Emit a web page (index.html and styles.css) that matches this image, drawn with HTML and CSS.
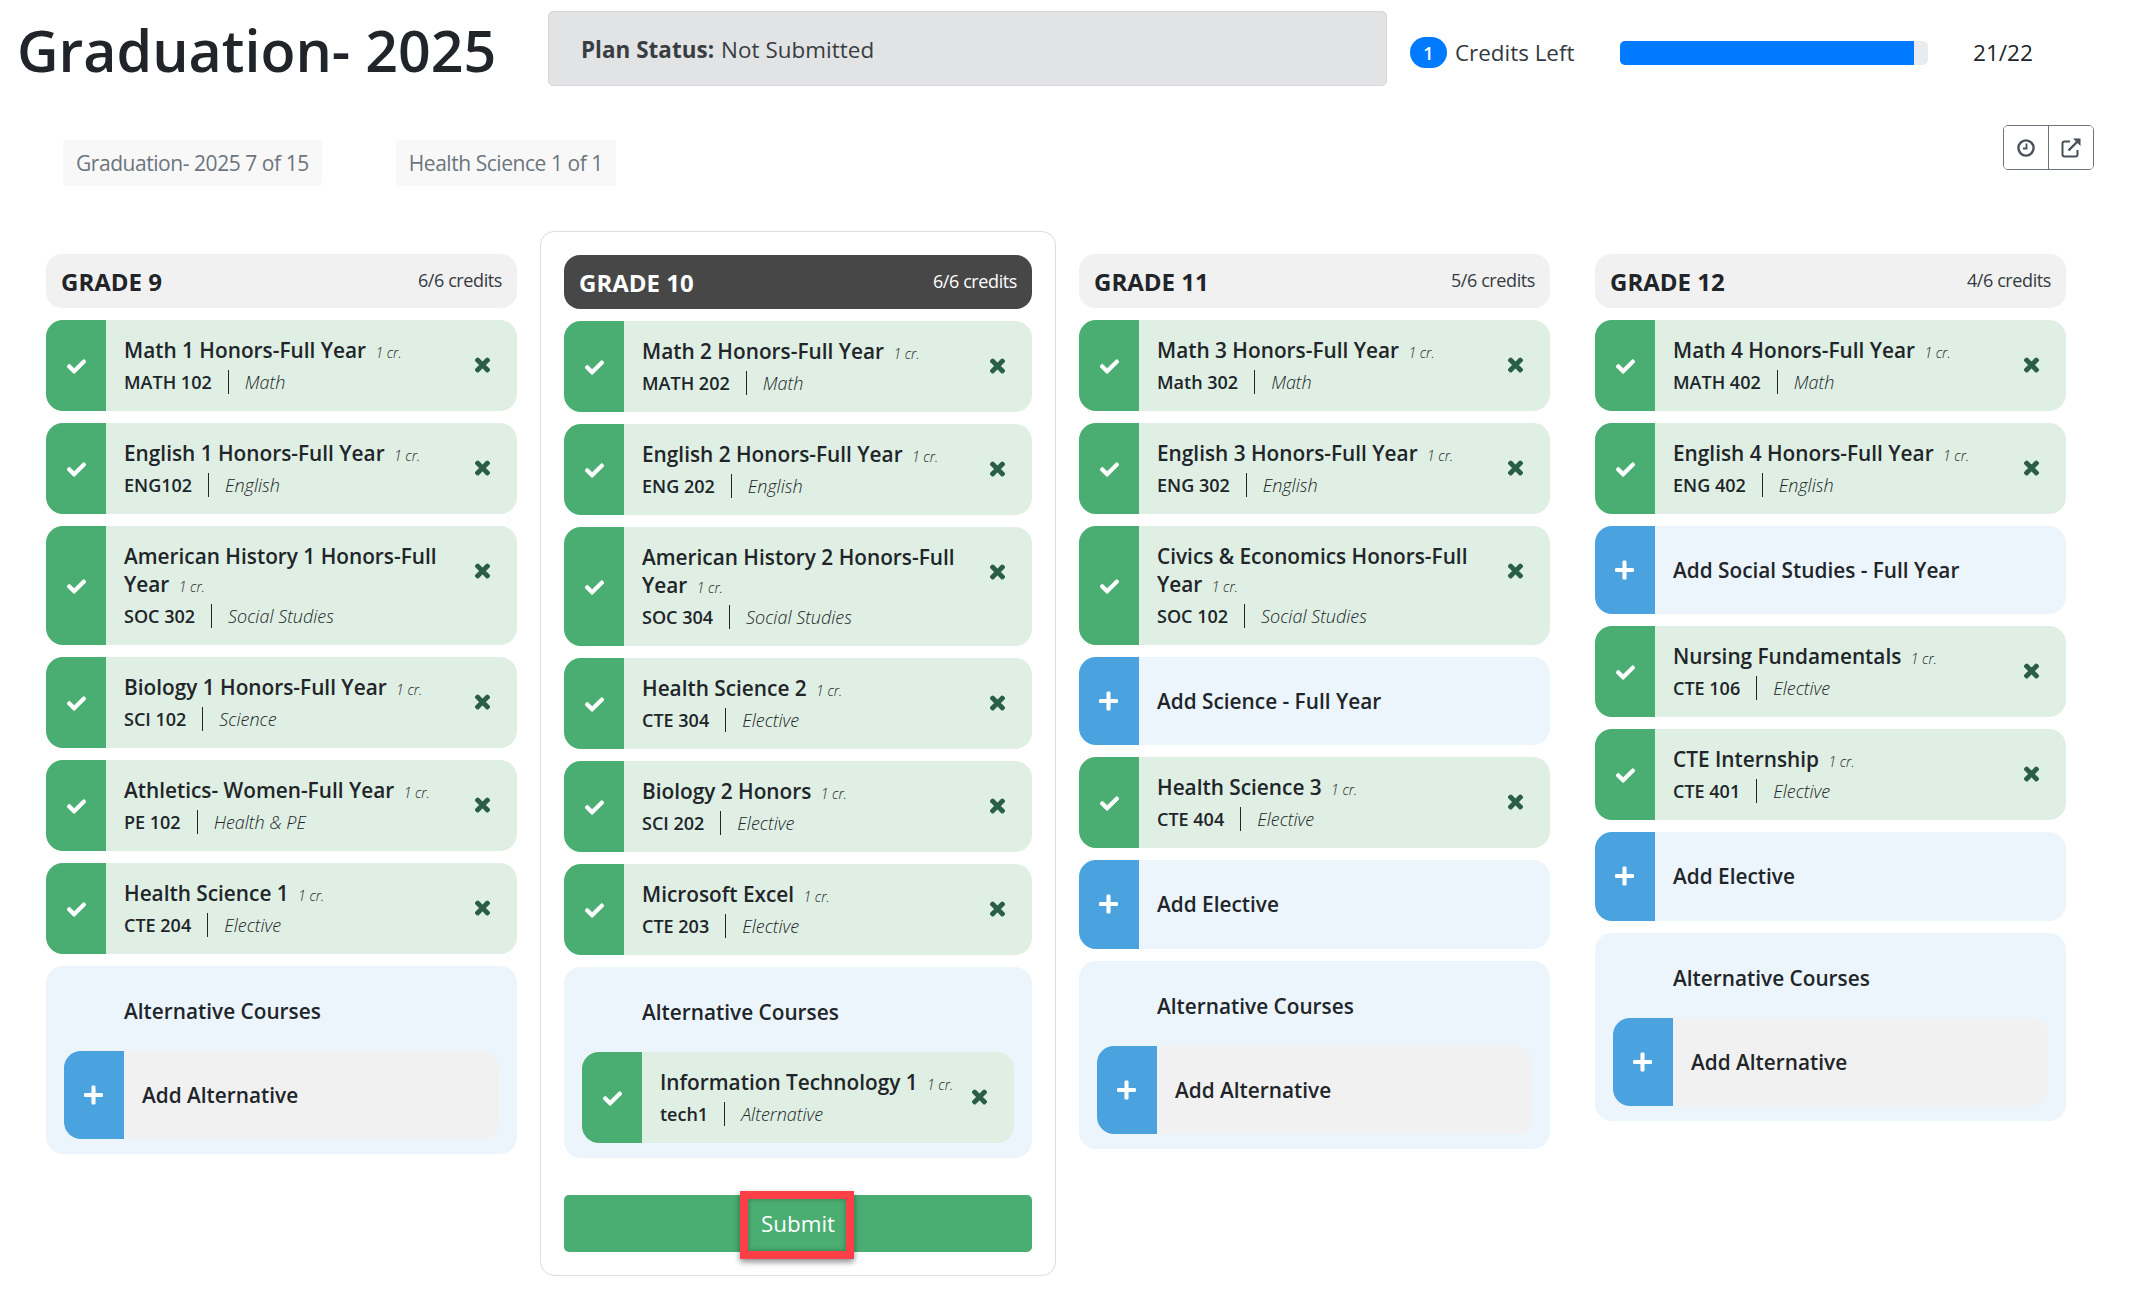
FILE: index.html
```html
<!DOCTYPE html>
<html lang="en">
<head>
<meta charset="utf-8">
<title>Graduation- 2025</title>
<link rel="stylesheet" href="styles.css">
</head>
<body>
<svg class="defs" width="0" height="0" aria-hidden="true">
  <symbol id="i-check" viewBox="0 0 512 512"><path d="M173.898 439.404l-166.4-166.4c-9.997-9.997-9.997-26.206 0-36.204l36.203-36.204c9.997-9.998 26.207-9.998 36.204 0L192 312.69 432.095 72.596c9.997-9.997 26.207-9.997 36.204 0l36.203 36.204c9.997 9.997 9.997 26.206 0 36.204l-294.4 294.401c-9.998 9.997-26.207 9.997-36.204-.001z"/></symbol>
  <symbol id="i-times" viewBox="0 0 352 512"><path d="M242.72 256l100.07-100.07c12.28-12.28 12.28-32.19 0-44.48l-22.24-22.24c-12.28-12.28-32.19-12.28-44.48 0L176 189.28 75.93 89.21c-12.28-12.28-32.19-12.28-44.48 0L9.21 111.45c-12.28 12.28-12.28 32.19 0 44.48L109.28 256 9.21 356.07c-12.28 12.28-12.28 32.19 0 44.48l22.24 22.24c12.28 12.28 32.2 12.28 44.48 0L176 322.72l100.07 100.07c12.28 12.28 32.2 12.28 44.48 0l22.24-22.24c12.28-12.28 12.28-32.19 0-44.48L242.72 256z"/></symbol>
  <symbol id="i-plus" viewBox="0 0 448 512"><path d="M416 208H272V64c0-17.67-14.33-32-32-32h-32c-17.67 0-32 14.33-32 32v144H32c-17.67 0-32 14.33-32 32v32c0 17.67 14.33 32 32 32h144v144c0 17.67 14.33 32 32 32h32c17.67 0 32-14.33 32-32V304h144c17.67 0 32-14.33 32-32v-32c0-17.67-14.33-32-32-32z"/></symbol>
</svg>

<header class="top">
  <h1 class="title">Graduation- 2025</h1>
  <div class="status"><b>Plan Status:</b> Not Submitted</div>
  <div class="credits"><span class="badge">1</span><span class="credits-label">Credits Left</span></div>
  <div class="progress"><div class="progress-fill" style="width:95.45%"></div></div>
  <div class="count">21/22</div>
</header>

<div class="tools">
  <div class="tags">
    <span class="tag">Graduation- 2025 7 of 15</span>
    <span class="tag">Health Science 1 of 1</span>
  </div>
  <div class="btn-group">
    <button class="tool-btn" aria-label="History"><svg width="20" height="20" viewBox="0 0 20 20" fill="none" stroke="#495057" stroke-width="2.4"><circle cx="10" cy="10" r="7.6"/><path d="M10.5 5.5v5H7" stroke-width="1.8"/></svg></button>
    <button class="tool-btn" aria-label="Open"><svg width="22" height="22" viewBox="0 0 22 22" fill="none" stroke="#495057" stroke-width="2"><path d="M10 4.5H4.5a2 2 0 0 0-2 2v11a2 2 0 0 0 2 2h11a2 2 0 0 0 2-2V13"/><path d="M8.5 13.5L18 4" stroke-width="2.4"/><path d="M13 1.5h7.5V9z" fill="#495057" stroke="none"/></svg></button>
  </div>
</div>

<main class="board">

  <section class="col">
    <div class="grade"><h2>GRADE 9</h2><span>6/6 credits</span></div>
    <article class="course"><div class="side"><svg class="i-check"><use href="#i-check"/></svg></div><div class="info"><div class="name">Math 1 Honors-Full Year <small>1 cr.</small></div><div class="meta"><b>MATH 102</b><i>Math</i></div></div><svg class="i-x"><use href="#i-times"/></svg></article>
    <article class="course"><div class="side"><svg class="i-check"><use href="#i-check"/></svg></div><div class="info"><div class="name">English 1 Honors-Full Year <small>1 cr.</small></div><div class="meta"><b>ENG102</b><i>English</i></div></div><svg class="i-x"><use href="#i-times"/></svg></article>
    <article class="course"><div class="side"><svg class="i-check"><use href="#i-check"/></svg></div><div class="info"><div class="name">American History 1 Honors-Full Year <small>1 cr.</small></div><div class="meta"><b>SOC 302</b><i>Social Studies</i></div></div><svg class="i-x"><use href="#i-times"/></svg></article>
    <article class="course"><div class="side"><svg class="i-check"><use href="#i-check"/></svg></div><div class="info"><div class="name">Biology 1 Honors-Full Year <small>1 cr.</small></div><div class="meta"><b>SCI 102</b><i>Science</i></div></div><svg class="i-x"><use href="#i-times"/></svg></article>
    <article class="course"><div class="side"><svg class="i-check"><use href="#i-check"/></svg></div><div class="info"><div class="name">Athletics- Women-Full Year <small>1 cr.</small></div><div class="meta"><b>PE 102</b><i>Health &amp; PE</i></div></div><svg class="i-x"><use href="#i-times"/></svg></article>
    <article class="course"><div class="side"><svg class="i-check"><use href="#i-check"/></svg></div><div class="info"><div class="name">Health Science 1 <small>1 cr.</small></div><div class="meta"><b>CTE 204</b><i>Elective</i></div></div><svg class="i-x"><use href="#i-times"/></svg></article>
    <div class="alt">
      <div class="alt-title">Alternative Courses</div>
      <article class="course add grey"><div class="side"><svg class="i-plus"><use href="#i-plus"/></svg></div><div class="add-label">Add Alternative</div></article>
    </div>
  </section>

  <section class="col col-active">
    <div class="grade dark"><h2>GRADE 10</h2><span>6/6 credits</span></div>
    <article class="course"><div class="side"><svg class="i-check"><use href="#i-check"/></svg></div><div class="info"><div class="name">Math 2 Honors-Full Year <small>1 cr.</small></div><div class="meta"><b>MATH 202</b><i>Math</i></div></div><svg class="i-x"><use href="#i-times"/></svg></article>
    <article class="course"><div class="side"><svg class="i-check"><use href="#i-check"/></svg></div><div class="info"><div class="name">English 2 Honors-Full Year <small>1 cr.</small></div><div class="meta"><b>ENG 202</b><i>English</i></div></div><svg class="i-x"><use href="#i-times"/></svg></article>
    <article class="course"><div class="side"><svg class="i-check"><use href="#i-check"/></svg></div><div class="info"><div class="name">American History 2 Honors-Full Year <small>1 cr.</small></div><div class="meta"><b>SOC 304</b><i>Social Studies</i></div></div><svg class="i-x"><use href="#i-times"/></svg></article>
    <article class="course"><div class="side"><svg class="i-check"><use href="#i-check"/></svg></div><div class="info"><div class="name">Health Science 2 <small>1 cr.</small></div><div class="meta"><b>CTE 304</b><i>Elective</i></div></div><svg class="i-x"><use href="#i-times"/></svg></article>
    <article class="course"><div class="side"><svg class="i-check"><use href="#i-check"/></svg></div><div class="info"><div class="name">Biology 2 Honors <small>1 cr.</small></div><div class="meta"><b>SCI 202</b><i>Elective</i></div></div><svg class="i-x"><use href="#i-times"/></svg></article>
    <article class="course"><div class="side"><svg class="i-check"><use href="#i-check"/></svg></div><div class="info"><div class="name">Microsoft Excel <small>1 cr.</small></div><div class="meta"><b>CTE 203</b><i>Elective</i></div></div><svg class="i-x"><use href="#i-times"/></svg></article>
    <div class="alt">
      <div class="alt-title">Alternative Courses</div>
      <article class="course"><div class="side"><svg class="i-check"><use href="#i-check"/></svg></div><div class="info"><div class="name">Information Technology 1 <small>1 cr.</small></div><div class="meta"><b>tech1</b><i>Alternative</i></div></div><svg class="i-x"><use href="#i-times"/></svg></article>
    </div>
    <div class="submit-bar">
      <button class="submit">Submit</button>
      <span class="highlight"></span>
    </div>
  </section>

  <section class="col">
    <div class="grade"><h2>GRADE 11</h2><span>5/6 credits</span></div>
    <article class="course"><div class="side"><svg class="i-check"><use href="#i-check"/></svg></div><div class="info"><div class="name">Math 3 Honors-Full Year <small>1 cr.</small></div><div class="meta"><b>Math 302</b><i>Math</i></div></div><svg class="i-x"><use href="#i-times"/></svg></article>
    <article class="course"><div class="side"><svg class="i-check"><use href="#i-check"/></svg></div><div class="info"><div class="name">English 3 Honors-Full Year <small>1 cr.</small></div><div class="meta"><b>ENG 302</b><i>English</i></div></div><svg class="i-x"><use href="#i-times"/></svg></article>
    <article class="course"><div class="side"><svg class="i-check"><use href="#i-check"/></svg></div><div class="info"><div class="name">Civics &amp; Economics Honors-Full Year <small>1 cr.</small></div><div class="meta"><b>SOC 102</b><i>Social Studies</i></div></div><svg class="i-x"><use href="#i-times"/></svg></article>
    <article class="course add"><div class="side"><svg class="i-plus"><use href="#i-plus"/></svg></div><div class="add-label">Add Science - Full Year</div></article>
    <article class="course"><div class="side"><svg class="i-check"><use href="#i-check"/></svg></div><div class="info"><div class="name">Health Science 3 <small>1 cr.</small></div><div class="meta"><b>CTE 404</b><i>Elective</i></div></div><svg class="i-x"><use href="#i-times"/></svg></article>
    <article class="course add"><div class="side"><svg class="i-plus"><use href="#i-plus"/></svg></div><div class="add-label">Add Elective</div></article>
    <div class="alt">
      <div class="alt-title">Alternative Courses</div>
      <article class="course add grey"><div class="side"><svg class="i-plus"><use href="#i-plus"/></svg></div><div class="add-label">Add Alternative</div></article>
    </div>
  </section>

  <section class="col col-last">
    <div class="grade"><h2>GRADE 12</h2><span>4/6 credits</span></div>
    <article class="course"><div class="side"><svg class="i-check"><use href="#i-check"/></svg></div><div class="info"><div class="name">Math 4 Honors-Full Year <small>1 cr.</small></div><div class="meta"><b>MATH 402</b><i>Math</i></div></div><svg class="i-x"><use href="#i-times"/></svg></article>
    <article class="course"><div class="side"><svg class="i-check"><use href="#i-check"/></svg></div><div class="info"><div class="name">English 4 Honors-Full Year <small>1 cr.</small></div><div class="meta"><b>ENG 402</b><i>English</i></div></div><svg class="i-x"><use href="#i-times"/></svg></article>
    <article class="course add"><div class="side"><svg class="i-plus"><use href="#i-plus"/></svg></div><div class="add-label">Add Social Studies - Full Year</div></article>
    <article class="course"><div class="side"><svg class="i-check"><use href="#i-check"/></svg></div><div class="info"><div class="name">Nursing Fundamentals <small>1 cr.</small></div><div class="meta"><b>CTE 106</b><i>Elective</i></div></div><svg class="i-x"><use href="#i-times"/></svg></article>
    <article class="course"><div class="side"><svg class="i-check"><use href="#i-check"/></svg></div><div class="info"><div class="name">CTE Internship <small>1 cr.</small></div><div class="meta"><b>CTE 401</b><i>Elective</i></div></div><svg class="i-x"><use href="#i-times"/></svg></article>
    <article class="course add"><div class="side"><svg class="i-plus"><use href="#i-plus"/></svg></div><div class="add-label">Add Elective</div></article>
    <div class="alt">
      <div class="alt-title">Alternative Courses</div>
      <article class="course add grey"><div class="side"><svg class="i-plus"><use href="#i-plus"/></svg></div><div class="add-label">Add Alternative</div></article>
    </div>
  </section>

</main>
</body>
</html>
```
FILE: styles.css
```css
* { box-sizing: border-box; }
html, body { margin: 0; padding: 0; }
body {
  font-family: "Open Sans", "Noto Sans", sans-serif;
  color: #212529;
  background: #fff;
  width: 2133px;
  height: 1301px;
  overflow: hidden;
  font-size: 21px;
}
.defs { position: absolute; }

.top { display: flex; align-items: flex-start; padding: 11px 0 0 17px; height: 125px; }
.title { margin: 0; width: 531px; font-size: 57.3px; line-height: 78px; font-weight: 600; }
.status {
  width: 839px; height: 75px; padding: 2px 32px 0; display: flex; align-items: center; gap: 7px;
  background: #e2e3e5; border: 1px solid #d6d8db; border-radius: 5px; color: #383d41;
  font-size: 22.4px; letter-spacing: 0.05px;
}
.status b { font-weight: 700; }
.credits { display: flex; align-items: center; margin: 26px 0 0 23px; width: 210px; }
.badge {
  width: 37px; height: 31px; border-radius: 16px; background: #007bff; color: #fff;
  display: flex; align-items: center; justify-content: center; font-size: 18px; font-weight: 600;
}
.credits-label { margin-left: 8px; font-size: 22.4px; color: #343a40; }
.progress { width: 308px; height: 24px; margin-top: 30px; background: #e9ecef; border-radius: 5px; overflow: hidden; }
.progress-fill { height: 100%; background: #007bff; }
.count { margin: 26px 0 0 45px; font-size: 22.6px; line-height: 32px; }

.tools { display: flex; justify-content: space-between; align-items: flex-start; padding: 0 39px 0 63px; height: 106px; }
.tags { display: flex; gap: 74px; padding-top: 15px; }
.tag {
  height: 46px; padding: 0 13px; display: flex; align-items: center; background: #f8f8f8;
  border-radius: 4px; color: #6c757d; font-size: 21px; letter-spacing: -0.45px;
}
.btn-group { display: flex; width: 91px; height: 45px; border: 1px solid #6c757d; border-radius: 5px; overflow: hidden; }
.tool-btn { flex: 1; padding: 0; border: 0; background: #fff; display: flex; align-items: center; justify-content: center; }
.tool-btn + .tool-btn { border-left: 1px solid #6c757d; }

.board { display: flex; align-items: flex-start; gap: 23px; padding: 23px 0 0 46px; }
.col { width: 471px; display: flex; flex-direction: column; gap: 12px; }
.col-last { margin-left: 22px; }
.col-active { width: 516px; margin-top: -23px; padding: 23px 23px 23px; border: 1px solid #ddd; border-radius: 14px; }

.grade {
  height: 54px; padding: 0 15px; display: flex; align-items: center; justify-content: space-between;
  background: #f1f1f1; border-radius: 16px;
}
.grade h2 { margin: 0; font-size: 24px; font-weight: 700; }
.grade span { margin-top: -2px; font-size: 18px; letter-spacing: -0.4px; color: #343a40; }
.grade.dark { background: #474747; color: #fff; }
.grade.dark span { color: #fff; }

.course { display: flex; align-items: center; background: #dfefe3; border-radius: 17px; overflow: hidden; min-height: 91px; }
.side { align-self: stretch; flex: 0 0 60px; padding-top: 2px; background: #4aad72; display: flex; align-items: center; justify-content: center; }
.i-check { width: 19px; height: 19px; fill: #fff; stroke: #fff; stroke-width: 14px; }
.i-plus { width: 19px; height: 22px; margin-right: 2px; fill: #fff; }
.i-x { flex: 0 0 15px; align-self: flex-start; width: 15px; height: 20px; margin: 35px 27px 0 12px; fill: #2a5f45; stroke: #2a5f45; stroke-width: 30px; }
.info { flex: 1; min-width: 0; padding: 16px 0 16px 18px; }
.name { font-size: 20.8px; line-height: 28px; font-weight: 650; }
.name small { margin-left: 4px; font-size: 14px; line-height: 1; font-weight: 300; font-style: italic; }
.meta { display: flex; align-items: center; margin-top: 5px; height: 26px; }
.meta b { padding-right: 16px; font-size: 18px; font-weight: 650; border-right: 1px solid #212529; line-height: 24px; }
.meta i { padding-left: 16px; font-size: 18px; font-weight: 300; }

.add { min-height: 88.25px; background: #ecf5fc; }
.add .side { padding-top: 0; background: #4aa3de; }
.add.grey { background: #f1f1f1; }
.add-label { padding-left: 18px; font-size: 20.8px; font-weight: 650; }

.alt { padding: 0 18px 15px; background: #ecf5fc; border-radius: 17px; }
.alt-title { height: 85px; padding: 31px 0 0 60px; font-size: 20.8px; line-height: 28px; font-weight: 650; }

.submit-bar { position: relative; margin-top: 25px; }
.submit {
  display: block; width: 100%; height: 57px; padding: 0; border: 0; border-radius: 5px;
  background: #4aad72; color: #fff; font-family: inherit; font-size: 22.4px;
}
.highlight {
  position: absolute; left: 176px; top: -4px; width: 114px; height: 68px;
  border: 8px solid #ff3f47; box-shadow: 0 3px 6px rgba(0,0,0,.45), inset 0 0 5px rgba(0,0,0,.3);
}
```
